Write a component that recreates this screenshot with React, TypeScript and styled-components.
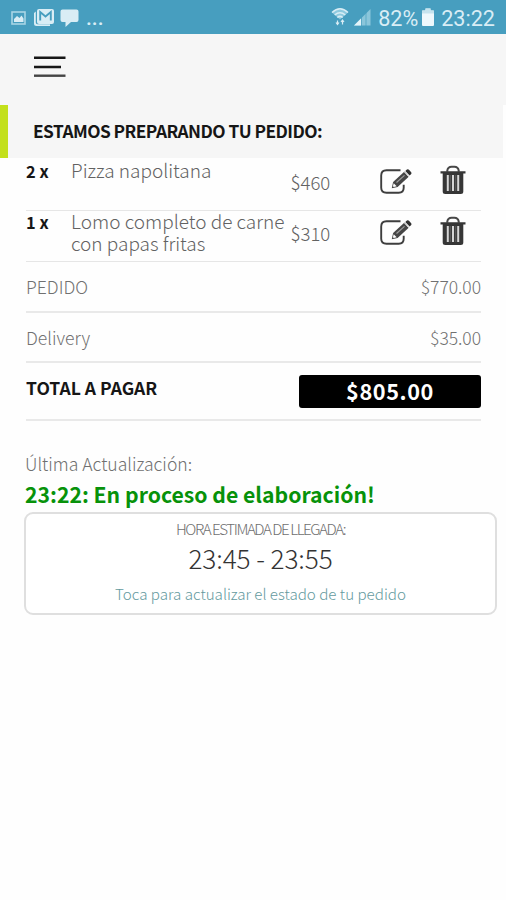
import React from "react";
import styled, { createGlobalStyle } from "styled-components";

const GlobalStyle = createGlobalStyle`
  * { box-sizing: border-box; }
  body {
    margin: 0;
    background: #fff;
    font-family: "Noto Sans CJK SC", "Noto Sans", sans-serif;
    font-weight: 300;
    color: #626262;
  }
`;

const Screen = styled.main`
  width: 506px;
  height: 900px;
  overflow: hidden;
  background: #fefefe;
`;

const StatusBar = styled.header`
  display: flex;
  justify-content: space-between;
  height: 34px;
  padding: 0 11px 0 11px;
  background: #479ebf;
  color: #d9edf5;
  font: 400 21.6px/37px Roboto, sans-serif;
`;

const StatusGroup = styled.div`
  display: flex;
  align-items: flex-start;
  svg { display: block; flex: none; }
`;

const Ellipsis = styled.span`
  margin-left: 7px;
  font-size: 21px;
  font-weight: 500;
`;

const BatteryText = styled.span`
  width: 43px;
  margin-left: 7px;
`;

const Clock = styled.span`
  margin-left: 6px;
`;

const NavBar = styled.nav`
  height: 71px;
  padding: 19px 0 0 34px;
  background: #f6f6f6;
`;

const MenuButton = styled.button`
  display: block;
  padding: 0;
  border: 0;
  background: none;
`;

const TitleBar = styled.h1`
  height: 53px;
  margin: 0 3px 2px 0;
  padding-left: 25px;
  border-left: 8px solid #c3e01c;
  background: #f6f6f6;
  color: #161616;
  font-size: 17.3px;
  font-weight: 700;
  line-height: 51px;
  letter-spacing: -0.54px;
`;

const Order = styled.section`
  width: 455px;
  margin-left: 26px;
`;

const ItemRow = styled.div`
  display: grid;
  grid-template-columns: 45px 219.500px 88.500px 60px 1fr;
  height: 51px;
  border-bottom: 1px solid #e6e6e6;
  line-height: 22px;
`;

const Quantity = styled.span`
  margin-top: -1px;
  color: #161616;
  font-size: 16.4px;
  font-weight: 700;
  line-height: 25px;
`;

const ItemName = styled.span`
  margin-top: -1px;
  font-size: 19px;
  white-space: nowrap;
`;

const ItemPrice = styled.span`
  padding-top: 11px;
  font-size: 18.6px;
`;

const IconButton = styled.button<{ $top: number }>`
  align-self: start;
  justify-self: start;
  padding: ${(p) => p.$top}px 0 0;
  border: 0;
  background: none;
  svg { display: block; }
`;

const SummaryRow = styled.div<{ $height: number }>`
  display: flex;
  justify-content: space-between;
  height: ${(p) => p.$height}px;
  border-bottom: 2px solid #e9e9e9;
  font-size: 17.6px;
  line-height: 49px;
  color: #707070;
`;

const SummaryValue = styled.span`
  font-size: 17.5px;
  letter-spacing: -0.05px;
`;

const TotalLabel = styled.strong`
  color: #161616;
  font-size: 17.5px;
  font-weight: 700;
  line-height: 49px;
`;

const TotalValue = styled.strong`
  width: 182px;
  height: 33px;
  margin-top: 12px;
  border-radius: 3px;
  background: #000;
  color: #fff;
  font-size: 21.7px;
  font-weight: 700;
  line-height: 32px;
  letter-spacing: 0.6px;
  text-align: center;
`;

const Status = styled.section`
  margin: 30px 9px 0 24px;
`;

const UpdatedLabel = styled.p`
  margin: 0;
  padding-left: 1px;
  color: #707070;
  font-size: 17.6px;
  line-height: 25px;
`;

const StatusMessage = styled.h2`
  margin: 0;
  padding-left: 1px;
  color: #07920a;
  font-size: 21.2px;
  font-weight: 700;
  line-height: 36px;
`;

const ArrivalCard = styled.button`
  display: block;
  width: 473px;
  height: 103px;
  padding: 0;
  border: 2px solid #dfdfdf;
  border-radius: 9px;
  background: #fff;
  font: inherit;
  text-align: center;
`;

const ArrivalLabel = styled.div`
  color: #707070;
  font-size: 15.2px;
  line-height: 20px;
  letter-spacing: -1.46px;
`;

const ArrivalTime = styled.div`
  color: #333;
  font-size: 26.2px;
  line-height: 40px;
  letter-spacing: -0.1px;
`;

const RefreshHint = styled.div`
  color: #649a9e;
  font-size: 15.15px;
  line-height: 31px;
`;

const StatusIcons = () => (
  <svg width="68" height="34" viewBox="11 0 68 34" fill="#d9edf5">
    <rect x="12" y="12" width="13" height="12" fill="none" stroke="#a8d5e5" strokeWidth="1.6" />
    <path d="M14 22v-3l3-3 2.5 2 2-2.5 2 3V22z" />
    <path d="M34 13v10.500q0 2.500 2.500 2.500H50v-1.700H37.500q-1.700 0-1.700-1.700V11.500z" />
    <rect x="37" y="9" width="17" height="15" rx="2" />
    <path d="M40.200 20.500v-8.500l5.300 4.500 5.300-4.500v8.500" fill="none" stroke="#479ebf" strokeWidth="1.900" />
    <path d="M62.500 9.500h14q2 0 2 2V20q0 2-2 2H71l-5.500 5v-5h-3q-2 0-2-2v-8.500q0-2 2-2z" />
  </svg>
);

const SignalIcons = () => (
  <svg width="40" height="34" viewBox="330 0 40 34">
    <path d="M331 12.500q8-7.500 16 0l-8 7z" fill="#8ecadf" />
    <g fill="none" stroke="#d9edf5" strokeWidth="1.500">
      <path d="M331 12.500q8-7.500 16 0M333.700 15q5.300-4.500 10.600 0M336.300 17.500q2.700-2.300 5.400 0" />
      <path d="M336.500 24.500v-4M335 22.500l1.500 2 1.500-2M341.500 20v4.500M340 22l1.500-2 1.500 2" strokeWidth="1.200" />
    </g>
    <path d="M353 25.500L369.500 9v16.500z" fill="#8bc6db" />
    <path d="M353 25.500l7-7v7z" fill="#e3f3f9" />
    <path d="M360.500 9v17M365 9v17" stroke="#479ebf" strokeWidth=".7" />
  </svg>
);

const BatteryIcon = () => (
  <svg width="14" height="34" viewBox="0 0 14 34">
    <path d="M4.500 8.500h5v2H12a1 1 0 0 1 1 1V25a1 1 0 0 1-1 1H2a1 1 0 0 1-1-1V11.500a1 1 0 0 1 1-1h2.500z" fill="#eef8fc" />
    <path d="M4.500 8.500h5v2H13v3H1v-3h3.500z" fill="#c5e3ee" />
  </svg>
);

const MenuIcon = () => (
  <svg width="32" height="28" viewBox="0 0 32 28" fill="none" strokeWidth="2.400">
    <path d="M0 4.800h31.500M0 14h27" stroke="#171717" />
    <path d="M0 22.700h31.500" stroke="#444" />
  </svg>
);

const EditIcon = () => (
  <svg width="34" height="28" viewBox="0 0 34 28">
    <path
      d="M21.500 3.300H7.500Q2.200 3.300 2.200 8.500v12.200q0 5 5.300 5h12.200q5 0 5-5v-3"
      fill="none" stroke="#3e3e3e" strokeWidth="1.900"
    />
    <path d="M12.800 21.200l1.300-6.200L25.500 4.600l4.500 4.900-11.400 10.600z" fill="#464646" />
    <path d="M14.700 16.300l3 2.900-2.900.900-.900-.900z" fill="#fff" />
    <path d="M17.500 15.500l8-7.200" stroke="#a0a0a0" strokeWidth="1.100" />
    <path d="M26.300 3.900l1.600-1.300q1.200-.7 2.300.400l2 2.200q.8 1-.200 2L30.600 8.600z" fill="#303030" />
    <path d="M25.100 4.700l4.700 5.100" stroke="#fff" strokeWidth=".8" />
  </svg>
);

const TrashIcon = () => (
  <svg width="28" height="30" viewBox="0 0 28 30">
    <path d="M8.300 6.800V5.500Q9 1.800 12.500 1.800h3q3.500 0 4.200 3.700v1.300" fill="none" stroke="#484848" strokeWidth="2" />
    <path d="M1.500 6.300h25v2.300H24.300V26.500q0 2.500-2.500 2.500H6.200q-2.500 0-2.500-2.500V8.600H1.500z" fill="#363636" />
    <path d="M8.800 10v16M14 10v16M19.200 10v16" stroke="#d6d6d6" strokeWidth="2" />
    <path d="M11.400 10v16M16.600 10v16" stroke="#555" strokeWidth="1.600" />
  </svg>
);

type ItemProps = { qty: number; name: React.ReactNode; price: string };

const Item = ({ qty, name, price }: ItemProps) => (
  <ItemRow>
    <Quantity>{qty} x</Quantity>
    <ItemName>{name}</ItemName>
    <ItemPrice>{price}</ItemPrice>
    <IconButton $top={7} aria-label="Editar"><EditIcon /></IconButton>
    <IconButton $top={5} aria-label="Eliminar"><TrashIcon /></IconButton>
  </ItemRow>
);

export default function App() {
  return (
    <Screen>
      <GlobalStyle />
      <StatusBar>
        <StatusGroup>
          <StatusIcons />
          <Ellipsis>...</Ellipsis>
        </StatusGroup>
        <StatusGroup>
          <SignalIcons />
          <BatteryText>82%</BatteryText>
          <BatteryIcon />
          <Clock>23:22</Clock>
        </StatusGroup>
      </StatusBar>
      <NavBar>
        <MenuButton aria-label="Menú"><MenuIcon /></MenuButton>
      </NavBar>
      <TitleBar>ESTAMOS PREPARANDO TU PEDIDO:</TitleBar>
      <Order>
        <Item qty={2} name="Pizza napolitana" price="$460" />
        <Item qty={1} name={<>Lomo completo de carne<br />con papas fritas</>} price="$310" />
        <SummaryRow $height={51}>
          <span>PEDIDO</span>
          <SummaryValue>$770.00</SummaryValue>
        </SummaryRow>
        <SummaryRow $height={50}>
          <span>Delivery</span>
          <SummaryValue>$35.00</SummaryValue>
        </SummaryRow>
        <SummaryRow $height={58}>
          <TotalLabel>TOTAL A PAGAR</TotalLabel>
          <TotalValue>$805.00</TotalValue>
        </SummaryRow>
      </Order>
      <Status>
        <UpdatedLabel>Última Actualización:</UpdatedLabel>
        <StatusMessage>23:22: En proceso de elaboración!</StatusMessage>
        <ArrivalCard>
          <ArrivalLabel>HORA ESTIMADA DE LLEGADA:</ArrivalLabel>
          <ArrivalTime>23:45 - 23:55</ArrivalTime>
          <RefreshHint>Toca para actualizar el estado de tu pedido</RefreshHint>
        </ArrivalCard>
      </Status>
    </Screen>
  );
}
